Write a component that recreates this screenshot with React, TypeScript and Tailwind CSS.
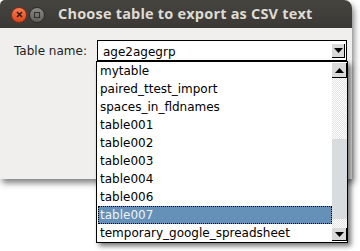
import React from "react";

const items = [
  "mytable",
  "paired_ttest_import",
  "spaces_in_fldnames",
  "table001",
  "table002",
  "table003",
  "table004",
  "table006",
  "table007",
  "temporary_google_spreadsheet",
];

function Arrow({ up }: { up?: boolean }) {
  return (
    <svg width="9" height="5" viewBox="0 0 9 5">
      {up ? <polygon points="0,5 9,5 4.5,0" fill="#000" /> : <polygon points="0,0 9,0 4.5,5" fill="#000" />}
    </svg>
  );
}

export default function App() {
  return (
    <div className="relative w-[360px] h-[251px] overflow-hidden bg-white" style={{ fontFamily: "'DejaVu Sans', sans-serif" }}>
      {/* window */}
      <div className="flex flex-col w-[352px] h-[179px] rounded-tl-[5px] rounded-tr-[8px] overflow-hidden shadow-[2px_4px_6px_rgba(0,0,0,0.5)]">
        <div className="h-[28px] shrink-0 bg-gradient-to-b from-[#45443f] to-[#3a3935] flex items-center pl-[11px] pt-[1px]">
          <div className="w-[16px] h-[16px] rounded-full bg-gradient-to-b from-[#f57e4e] to-[#d9441a] border border-[#8a2f14] flex items-center justify-center">
            <svg width="7" height="7" viewBox="0 0 7 7">
              <path d="M1 1 L6 6 M6 1 L1 6" stroke="#3a1a0e" strokeWidth="1.6" />
            </svg>
          </div>
          <div className="ml-[2px] w-[16px] h-[16px] rounded-full bg-gradient-to-b from-[#8a8985] to-[#5f5e5a] border border-[#2e2d2a] flex items-center justify-center">
            <div className="w-[6px] h-[6px] border border-[#2f2e2b]" />
          </div>
          <div className="ml-[13px] text-[14.5px] font-bold text-[#dfdbd2] leading-none tracking-[0.2px]" style={{ fontFamily: "'Open Sans', sans-serif" }}>
            Choose table to export as CSV text
          </div>
        </div>
        <div className="flex-1 bg-[#f0efee] flex items-start pt-[12px] pl-[14px]">
          <div className="text-[12px] text-[#1e1e1e] leading-[22px] w-[83px]">Table name:</div>
          <div className="w-[250px] h-[21px] bg-white border border-black flex items-center pl-[5px] pr-[1px]">
            <span className="flex-1 text-[12px] text-black leading-none pt-[2px]">age2agegrp</span>
            <div className="w-[13px] h-[14px] bg-[#d9d9d9] border-r border-b border-black flex items-center justify-center">
              <Arrow />
            </div>
          </div>
        </div>
      </div>

      {/* dropdown list */}
      <div className="absolute left-[96px] top-[61px] w-[252px] h-[182px] bg-white border border-black flex shadow-[3px_3px_5px_rgba(0,0,0,0.55)]">
        <div className="flex-1 flex flex-col pl-[1px]">
          {items.map((it) => (
            <div
              key={it}
              className={
                "h-[18px] pl-[2px] flex items-center text-[12px] leading-none " +
                (it === "table007"
                  ? "bg-[#6590b8] text-[#eef2f6] outline-1 outline-dotted outline-black -outline-offset-1"
                  : "text-black")
              }
            >
              {it}
            </div>
          ))}
        </div>
        <div className="w-[15px] flex flex-col pt-[1px] pb-[1px]">
          <div className="h-[15px] bg-[#d9d9d9] border-r border-b border-black flex items-center justify-center">
            <Arrow up />
          </div>
          <div className="h-[61px] bg-[repeating-conic-gradient(#e3e3e3_0%_25%,#ffffff_0%_50%)] [background-size:2px_2px]" />
          <div className="h-[80px] bg-[#d9dcdf]" />
          <div className="flex-1 bg-[repeating-conic-gradient(#e3e3e3_0%_25%,#ffffff_0%_50%)] [background-size:2px_2px]" />
          <div className="h-[13px] bg-[#d9d9d9] border-r border-b border-black flex items-center justify-center">
            <Arrow />
          </div>
        </div>
      </div>
    </div>
  );
}
